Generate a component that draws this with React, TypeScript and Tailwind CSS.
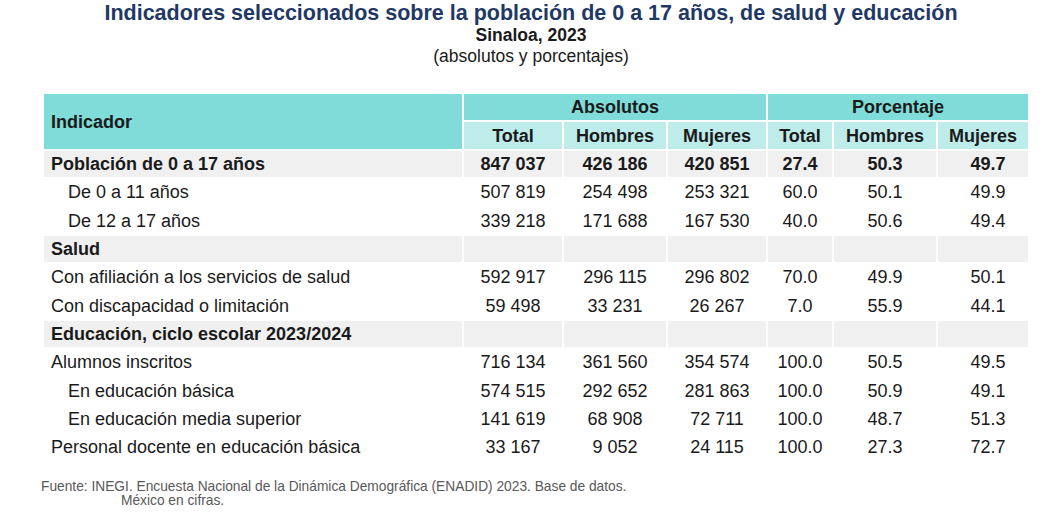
import React from 'react';

interface Row {
  label: string;
  values: string[];
  kind: 'section' | 'item' | 'sub';
}

const rows: Row[] = [
  { label: 'Población de 0 a 17 años', values: ['847 037', '426 186', '420 851', '27.4', '50.3', '49.7'], kind: 'section' },
  { label: 'De 0 a 11 años', values: ['507 819', '254 498', '253 321', '60.0', '50.1', '49.9'], kind: 'sub' },
  { label: 'De 12 a 17 años', values: ['339 218', '171 688', '167 530', '40.0', '50.6', '49.4'], kind: 'sub' },
  { label: 'Salud', values: ['', '', '', '', '', ''], kind: 'section' },
  { label: 'Con afiliación a los servicios de salud', values: ['592 917', '296 115', '296 802', '70.0', '49.9', '50.1'], kind: 'item' },
  { label: 'Con discapacidad o limitación', values: ['59 498', '33 231', '26 267', '7.0', '55.9', '44.1'], kind: 'item' },
  { label: 'Educación, ciclo escolar 2023/2024', values: ['', '', '', '', '', ''], kind: 'section' },
  { label: 'Alumnos inscritos', values: ['716 134', '361 560', '354 574', '100.0', '50.5', '49.5'], kind: 'item' },
  { label: 'En educación básica', values: ['574 515', '292 652', '281 863', '100.0', '50.9', '49.1'], kind: 'sub' },
  { label: 'En educación media superior', values: ['141 619', '68 908', '72 711', '100.0', '48.7', '51.3'], kind: 'sub' },
  { label: 'Personal docente en educación básica', values: ['33 167', '9 052', '24 115', '100.0', '27.3', '72.7'], kind: 'item' },
];

const colWidths = ['w-[98px]', 'w-[102px]', 'w-[98px]', 'w-[64px]', 'w-[102px]', 'w-[90px]'];

export default function App() {
  return (
    <div className="w-[1049px] h-[519px] bg-white overflow-hidden font-['Liberation_Sans',Arial,sans-serif] text-[#1a1a1a]">
      <div className="pt-[2px] pl-[13px] text-center">
        <h1 className="text-[21.5px] leading-[22px] font-bold text-[#1f3864]">
          Indicadores seleccionados sobre la población de 0 a 17 años, de salud y educación
        </h1>
        <p className="text-[17.5px] leading-[20px] font-bold mt-[1px]">Sinaloa, 2023</p>
        <p className="text-[17.5px] leading-[20px] mt-[1px]">(absolutos y porcentajes)</p>
      </div>

      <table className="ml-[42px] mt-[26px] border-separate border-spacing-[2px] text-[18px] leading-[20px]">
        <thead>
          <tr className="h-[26px]">
            <th rowSpan={2} className="w-[418px] bg-[#80dcd8] text-left pl-[7px] font-bold">
              Indicador
            </th>
            <th colSpan={3} className="bg-[#80dcd8] font-bold">Absolutos</th>
            <th colSpan={3} className="bg-[#80dcd8] font-bold">Porcentaje</th>
          </tr>
          <tr className="h-[27px]">
            {['Total', 'Hombres', 'Mujeres', 'Total', 'Hombres', 'Mujeres'].map((h, i) => (
              <th key={i} className={`${colWidths[i]} bg-[#bdeceb] font-bold`}>
                {h}
              </th>
            ))}
          </tr>
        </thead>
        <tbody>
          {rows.map((row, r) => {
            const isSection = row.kind === 'section';
            return (
              <tr key={r} className="h-[26.3px]">
                <td
                  className={`${isSection ? 'bg-[#f0f0f0] font-bold' : ''} ${
                    row.kind === 'sub' ? 'pl-[24px]' : 'pl-[7px]'
                  }`}
                >
                  {row.label}
                </td>
                {row.values.map((v, i) => (
                  <td
                    key={i}
                    className={`text-center ${isSection ? 'bg-[#f0f0f0] font-bold' : ''} ${i === 5 ? 'pl-[10px]' : ''}`}
                  >
                    {v}
                  </td>
                ))}
              </tr>
            );
          })}
        </tbody>
      </table>

      <div className="mt-[18px] ml-[41px] text-[13.75px] leading-[14px] text-[#595959]">
        <p>Fuente: INEGI. Encuesta Nacional de la Dinámica Demográfica (ENADID) 2023. Base de datos.</p>
        <p className="pl-[80px]">México en cifras.</p>
      </div>
    </div>
  );
}
